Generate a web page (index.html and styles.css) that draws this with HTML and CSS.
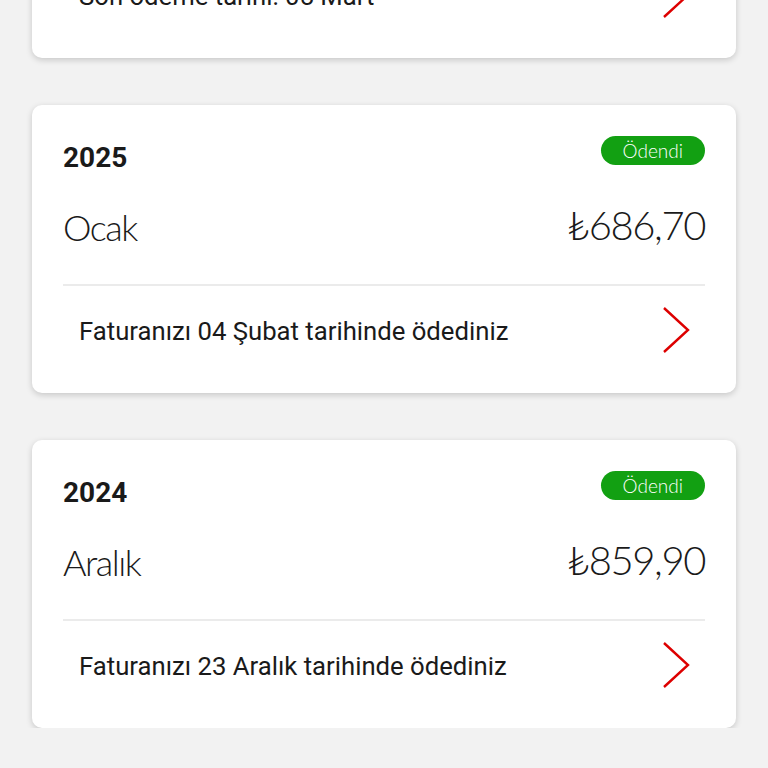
FILE: index.html
```html
<!DOCTYPE html>
<html lang="tr">
<head>
  <meta charset="UTF-8">
  <meta name="viewport" content="width=device-width, initial-scale=1.0">
  <title>Faturalarım</title>
  <link rel="stylesheet" href="styles.css">
</head>
<body>

  <!-- Bill list -->
  <div class="bill-list">

    <div class="bill-card">
      <div class="bill-head">
        <span class="bill-year">2025</span>
        <span class="badge badge-due">Ödenmedi</span>
      </div>
      <div class="bill-main">
        <span class="bill-month">Şubat</span>
        <span class="bill-amount">₺686,70</span>
      </div>
      <div class="bill-foot">
        <span class="bill-note">Son ödeme tarihi: 05 Mart</span>
        <svg class="chevron" width="28" height="50" viewBox="0 0 28 50"><path d="M2 2 L26 24 L2 46" /></svg>
      </div>
    </div>

    <div class="bill-card">
      <div class="bill-head">
        <span class="bill-year">2025</span>
        <span class="badge">Ödendi</span>
      </div>
      <div class="bill-main">
        <span class="bill-month">Ocak</span>
        <span class="bill-amount">₺686,70</span>
      </div>
      <div class="bill-foot">
        <span class="bill-note">Faturanızı 04 Şubat tarihinde ödediniz</span>
        <svg class="chevron" width="28" height="50" viewBox="0 0 28 50"><path d="M2 2 L26 24 L2 46" /></svg>
      </div>
    </div>

    <div class="bill-card">
      <div class="bill-head">
        <span class="bill-year">2024</span>
        <span class="badge">Ödendi</span>
      </div>
      <div class="bill-main">
        <span class="bill-month">Aralık</span>
        <span class="bill-amount">₺859,90</span>
      </div>
      <div class="bill-foot">
        <span class="bill-note">Faturanızı 23 Aralık tarihinde ödediniz</span>
        <svg class="chevron" width="28" height="50" viewBox="0 0 28 50"><path d="M2 2 L26 24 L2 46" /></svg>
      </div>
    </div>

  </div>

</body>
</html>
```

FILE: styles.css
```css
body {
  margin: 0;
  background-color: #f2f2f2;
  font-family: 'Roboto', 'Liberation Sans', sans-serif;
  color: #1a1a1a;
  overflow: hidden;
}
.bill-list {
  margin-top: -230px;
  padding: 0 32px;
  display: flex;
  flex-direction: column;
  gap: 47px;
}
.bill-card {
  background-color: white;
  border-radius: 10px;
  box-shadow: 0 2px 6px rgba(0, 0, 0, 0.18);
  padding: 31px 31px 0;
  height: 288px;
  box-sizing: border-box;
  display: flex;
  flex-direction: column;
}
.bill-head {
  display: flex;
  justify-content: space-between;
  align-items: center;
  height: 29px;
}
.bill-year {
  font-size: 28px;
  font-weight: bold;
  margin-top: 13px;
}
.badge {
  background-color: #12a012;
  color: white;
  font-family: 'Lato', 'Open Sans', sans-serif;
  font-weight: 300;
  font-size: 19px;
  line-height: 29px;
  height: 29px;
  padding: 0 22px;
  border-radius: 15px;
}
.badge-due {
  background-color: #e60000;
}
.bill-main {
  display: flex;
  justify-content: space-between;
  align-items: center;
  margin-top: 30px;
  height: 60px;
  font-family: 'Lato', 'Open Sans', sans-serif;
  font-weight: 300;
  color: #1a1a1a;
}
.bill-month {
  font-size: 36px;
  letter-spacing: -1.5px;
  margin-top: 4px;
}
.bill-amount {
  font-size: 40px;
  letter-spacing: -1.4px;
}
.bill-foot {
  border-top: 2px solid #ebebeb;
  margin-top: 29px;
  display: flex;
  justify-content: space-between;
  align-items: center;
  padding: 20px 15px 0 16px;
}
.bill-note {
  font-size: 25.7px;
}
.chevron {
  fill: none;
  stroke: #dd0000;
  stroke-width: 2.4;
}
```
